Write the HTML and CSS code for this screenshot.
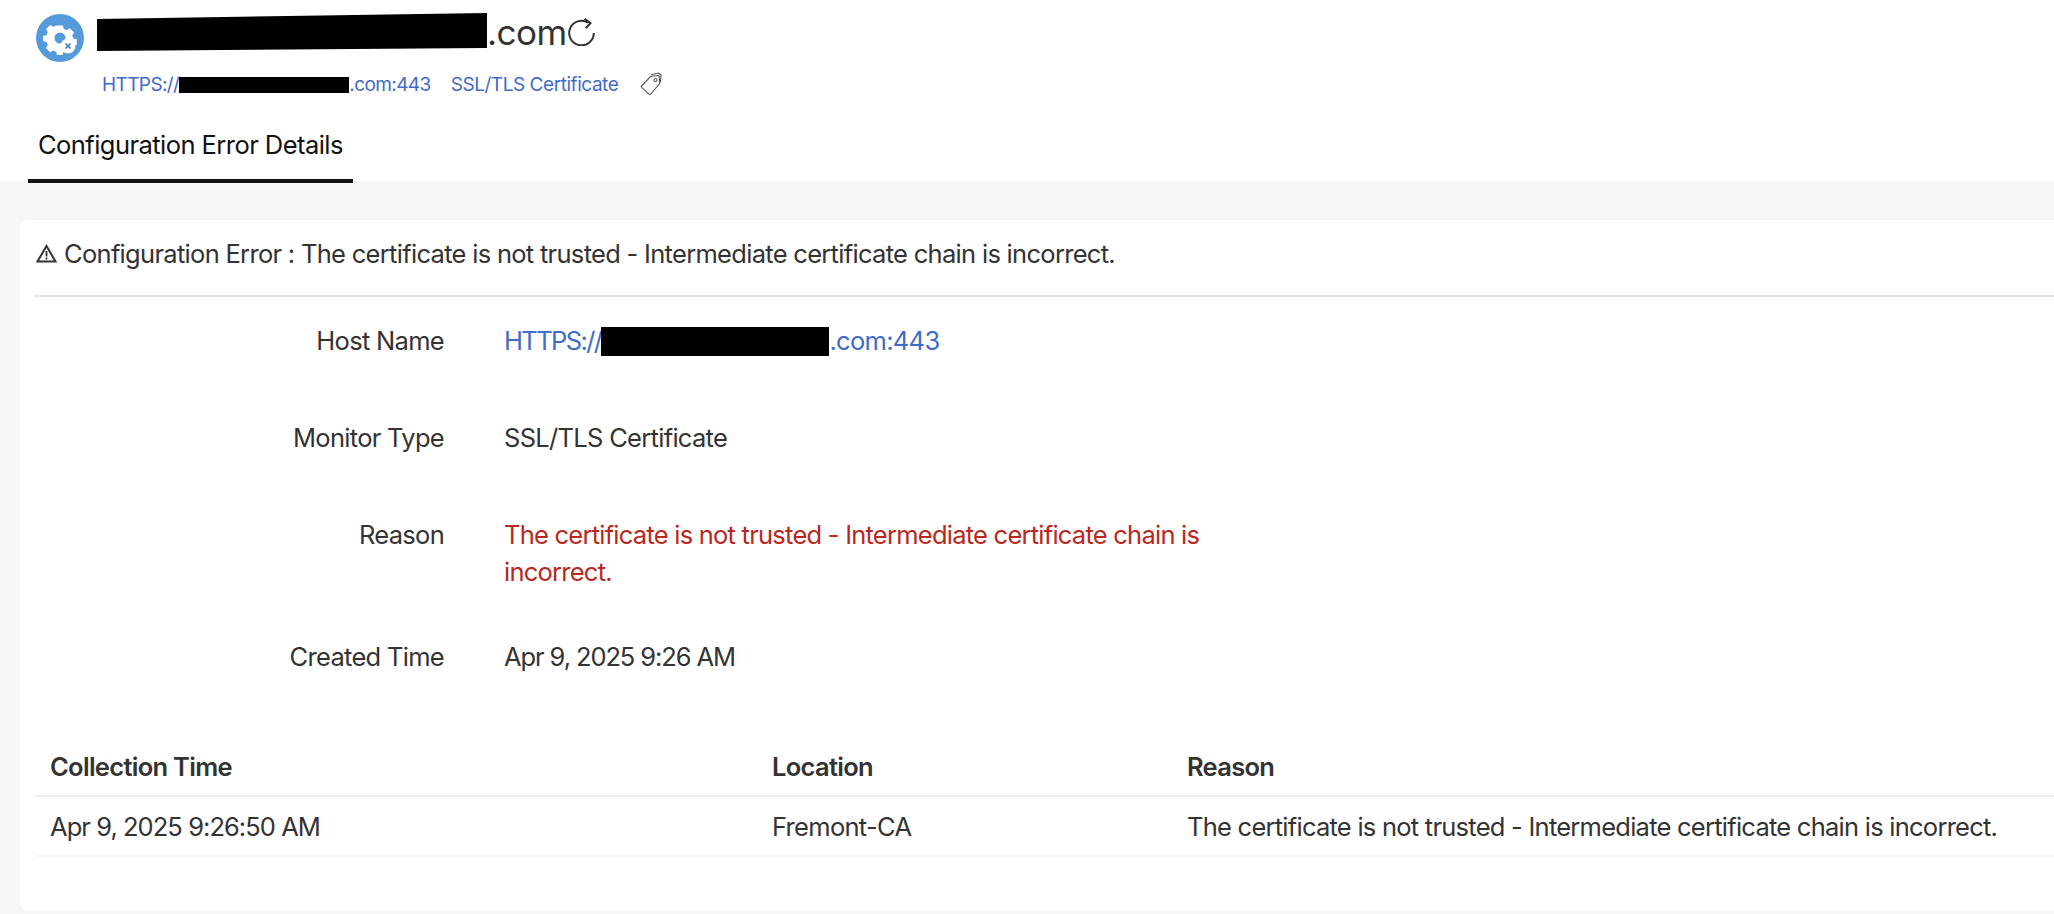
FILE: index.html
```html
<!DOCTYPE html>
<html lang="en">
<head>
<meta charset="utf-8">
<title>Configuration Error Details</title>
<link rel="stylesheet" href="styles.css">
</head>
<body>
<header class="page-head">
  <div class="title-row">
    <svg class="status-icon" viewBox="0 0 48 48" aria-hidden="true">
      <circle cx="24" cy="24" r="24" fill="#559ada"/>
      <path fill="#fff" fill-rule="evenodd" d="M21 11.500h6l.8 3.400 3 1.200 3-1.800 4.200 4.200-1.800 3 1.200 3 3.400.8v5.400l-3.400.8-1.200 3-1.800 3-4.200-1-2.800 1.200-.8 3.300h-5.600l-.8-3.300-3-1.200-3 1.800-4.200-4.200 1.800-3-1.200-3-3.400-.8v-5.400l3.400-.8 1.200-3-1.800-3 4.200-4.200 3 1.800 3-1.200zM24 18.500a5.500 5.500 0 1 0 0 11 5.500 5.500 0 0 0 0-11z"/>
      <circle cx="32" cy="32" r="7.500" fill="#fff"/>
      <path d="M29.500 29.500l5 5m0-5l-5 5" stroke="#3f79b5" stroke-width="1.600" fill="none"/>
    </svg>
    <h1 class="title"><span class="redact redact-title"></span><span>.com</span></h1>
    <svg class="refresh" viewBox="0 0 27 28" aria-hidden="true">
      <path d="M20 4.600A12.300 12.300 0 1 0 25.800 15" fill="none" stroke="#333" stroke-width="2"/>
      <path d="M16.500 .8l6 4.400-4.800 5" fill="none" stroke="#333" stroke-width="2"/>
    </svg>
  </div>
  <div class="sub-row">
    <a class="link host-link">HTTPS://<span class="redact redact-sub"></span>.com:443</a>
    <a class="link">SSL/TLS Certificate</a>
    <svg class="tag" viewBox="0 0 22 24" aria-hidden="true">
      <path d="M1.500 14L10.500 4.500l8.500-1.200.8 8-9 10.700a1.200 1.200 0 0 1-1.700.1L1.500 15.400a1 1 0 0 1 0-1.400z" fill="none" stroke="#555" stroke-width="1.100"/>
      <path d="M11 2.800l7.500-1.800 2.500 1.800-.6 7.500" fill="none" stroke="#555" stroke-width="1.100"/>
      <circle cx="15.500" cy="8" r="1.500" fill="none" stroke="#555" stroke-width="1.100"/>
    </svg>
  </div>
  <nav class="tabs"><span class="tab">Configuration Error Details</span></nav>
</header>
<main class="content">
  <section class="card">
    <h2 class="error-head">
      <svg class="warn" viewBox="0 0 21 19" aria-hidden="true">
        <path d="M10.500 2L1.500 17.500h18z" fill="none" stroke="#333" stroke-width="2"/>
        <path d="M10.500 7v5.500M10.500 13.500v2" stroke="#333" stroke-width="1.800"/>
      </svg>
      <span>Configuration Error : The certificate is not trusted - Intermediate certificate chain is incorrect.</span>
    </h2>
    <dl class="details">
      <div class="detail d-host"><dt>Host Name</dt><dd><a class="link"><span class="proto">HTTPS://</span><span class="redact redact-host"></span>.com:443</a></dd></div>
      <div class="detail d-type"><dt>Monitor Type</dt><dd>SSL/TLS Certificate</dd></div>
      <div class="detail d-reason"><dt>Reason</dt><dd class="error-text">The certificate is not trusted - Intermediate certificate chain is incorrect.</dd></div>
      <div class="detail d-time"><dt>Created Time</dt><dd class="stamp">Apr 9, 2025 9:26 AM</dd></div>
    </dl>
    <table class="log">
      <thead><tr><th class="c1">Collection Time</th><th class="c2">Location</th><th>Reason</th></tr></thead>
      <tbody><tr><td class="stamp-sm">Apr 9, 2025 9:26:50 AM</td><td>Fremont-CA</td><td class="reason-cell">The certificate is not trusted - Intermediate certificate chain is incorrect.</td></tr></tbody>
    </table>
  </section>
</main>
</body>
</html>
```
FILE: styles.css
```css
* { box-sizing: border-box; }
html, body { margin: 0; padding: 0; height: 100%; }
body {
  font-family: Inter, "Liberation Sans", sans-serif;
  color: #333;
  background: #f7f7f7;
  overflow: hidden;
  display: flex;
  flex-direction: column;
  height: 914px;
}
a.link { color: #3f6bc9; text-decoration: none; }
.redact { display: inline-block; background: #000; vertical-align: middle; }

.page-head { background: #fff; height: 181px; padding: 14px 0 0 36px; position: relative; }
.title-row { display: flex; align-items: center; height: 48px; }
.status-icon { width: 48px; height: 48px; flex: none; }
.title { margin: 0 0 0 13px; padding-bottom: 12px; font-size: 35px; font-weight: 400; line-height: 48px; display: flex; align-items: center; letter-spacing: -0.5px; }
.redact-title { width: 390px; height: 38px; clip-path: polygon(0 6px, 100% 0, 100% 92%, 0 100%); }
.refresh { width: 27px; height: 28px; margin: 0 0 12px 1px; flex: none; }
.sub-row { display: flex; align-items: center; height: 24px; margin: 10px 0 0 66px; font-size: 19px; letter-spacing: -0.45px; }
.host-link { letter-spacing: -0.6px; }
.sub-row .link + .link { margin-left: 20px; }
.redact-sub { width: 170px; height: 16px; margin-top: -1px; }
.tag { width: 22px; height: 24px; margin-left: 22px; flex: none; }
.tabs { position: absolute; left: 28px; bottom: -2px; }
.tab { display: block; width: 325px; height: 56px; padding-left: 10px; border-bottom: 4px solid #111; font-size: 25.5px; line-height: 36px; color: #111; letter-spacing: -0.55px; }

.content { flex: 1; padding: 39px 0 3px 20px; }
.card { height: 691px; background: #fff; border-radius: 8px 0 0 8px; padding: 0 0 0 14px; }
.error-head { margin: 0; height: 77px; border-bottom: 2px solid #e3e3e3; display: flex; align-items: center; font-size: 25.5px; font-weight: 400; padding: 0 0 8px 2px; letter-spacing: -0.7px; }
.warn { width: 21px; height: 19px; margin-right: 7px; flex: none; }

.details { margin: 0; font-size: 25.5px; line-height: 37px; letter-spacing: -0.7px; }
.detail { display: grid; grid-template-columns: 410px 720px; column-gap: 60px; }
.detail dt { text-align: right; }
.detail dd { margin: 0; }
.d-host { margin-top: 25px; }
.d-type { margin-top: 60px; }
.d-reason { margin-top: 60px; }
.d-time { margin-top: 48px; }
.proto { letter-spacing: -1.6px; }
.error-text { color: #b8281c; letter-spacing: -0.76px; }
.stamp { letter-spacing: -1.1px; }
.redact-host { width: 228px; height: 29px; margin-top: -4px; }

.log { width: 100%; margin-top: 63px; border-collapse: collapse; table-layout: fixed; font-size: 25.5px; letter-spacing: -0.7px; }
.log th, .log td { text-align: left; padding: 0 0 0 16px; font-weight: 400; }
.log th { font-weight: 600; height: 58px; border-bottom: 2px solid #eee; }
.log td { height: 60px; border-bottom: 2px solid #f5f5f5; }
.log .stamp-sm { letter-spacing: -0.95px; }
.log .reason-cell { letter-spacing: -0.75px; }
.c1 { width: 722px; }
.c2 { width: 415px; }
```
